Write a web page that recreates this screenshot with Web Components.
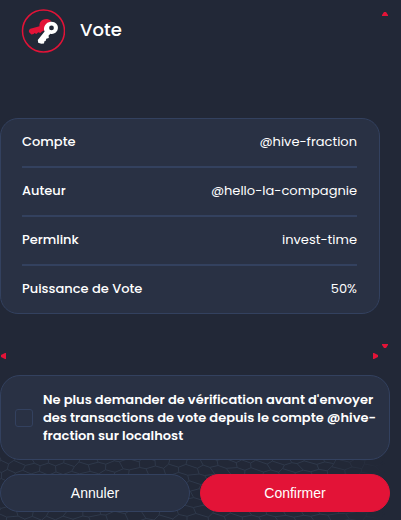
<!DOCTYPE html>
<html lang="fr">
<head>
<meta charset="utf-8">
<meta name="viewport" content="width=device-width, initial-scale=1">
<title>Vote</title>
<style>
  :root {
    --bg: #222837;
    --panel: #293144;
    --line: #33415f;
    --accent: #e31337;
    --text: #ffffff;
  }
  body {
    margin: 0;
    background: var(--bg);
    color: var(--text);
    font-family: Poppins, Inter, "Liberation Sans", sans-serif;
    font-size: 13px;
    line-height: 18px;
  }
</style>
</head>
<body>
<vote-dialog>
  <dialog-header slot="header">Vote</dialog-header>
  <detail-card slot="details">
    <detail-row label="Compte">@hive-fraction</detail-row>
    <detail-row label="Auteur">@hello-la-compagnie</detail-row>
    <detail-row label="Permlink">invest-time</detail-row>
    <detail-row label="Puissance de Vote">50%</detail-row>
  </detail-card>
  <confirm-option slot="actions">Ne plus demander de vérification avant d'envoyer des transactions de vote depuis le compte @hive-fraction sur localhost</confirm-option>
  <pill-button slot="buttons">Annuler</pill-button>
  <pill-button slot="buttons" primary>Confirmer</pill-button>
</vote-dialog>

<script>
class Base extends HTMLElement {
  constructor() {
    super();
    this.attachShadow({ mode: "open" }).innerHTML = this.constructor.html;
  }
}

customElements.define("vote-dialog", class extends Base {
  static html = `
    <style>
      :host { display: block; position: relative; min-height: 100vh; box-sizing: border-box; padding: 0 11px 8px 0; overflow: hidden; }
      hex-backdrop { position: absolute; left: 0; right: 0; bottom: 0; height: 66px; }
      main { position: relative; }
      .scroller { display: grid; grid-template-columns: 1fr 10px; grid-template-rows: auto 10px; }
      .content { padding: 9px 0 37px; }
      .details { margin-top: 65px; }
      .buttons { display: grid; grid-template-columns: 1fr 1fr; gap: 10px; margin-top: 14px; }
      .actions { margin-top: 14px; }
    </style>
    <hex-backdrop></hex-backdrop>
    <main>
      <div class="scroller">
        <div class="content">
          <slot name="header"></slot>
          <div class="details"><slot name="details"></slot></div>
        </div>
        <scroll-arrows vertical></scroll-arrows>
        <scroll-arrows></scroll-arrows>
      </div>
      <div class="actions"><slot name="actions"></slot></div>
      <div class="buttons"><slot name="buttons"></slot></div>
    </main>`;
});

customElements.define("dialog-header", class extends Base {
  static html = `
    <style>
      :host { display: flex; align-items: center; gap: 15px; padding-left: 21px; }
      svg { display: block; flex: none; }
      h1 { margin: 0; font-size: 18px; line-height: 24px; font-weight: 500; padding-bottom: 2px; }
    </style>
    <svg width="44" height="44" viewBox="0 0 44 44" aria-hidden="true">
      <circle cx="22.5" cy="22" r="21" fill="none" stroke="#e31337" stroke-width="1.5"/>
      <path fill="#e31337" d="M30 12C27 9 21.8 9.6 19.6 12.8C18.6 14.2 18.3 15.7 18.5 17.2L9.3 19.7C7.9 20.3 7.4 22.2 8.3 23.5L10.4 25.4L12.7 25L13.5 23.9L15.3 25L17.3 23.2L19.3 24L21 22.4L24 21L28 15Z"/>
      <path fill="#fff" fill-rule="evenodd" d="M29.6 12.7C34 12.2 37.4 15.3 36.9 19.3C36.4 23.5 32.6 25.6 29.4 24.7L27.6 26.6L27.8 28.9L25.3 29.7L24.6 32L23.4 32.2L23 34.4L20.3 34.8L17.2 33.8L16.8 30.9L23.6 22.6C21.6 18 24.9 13.2 29.6 12.7ZM30.5 16.5A2.4 2.4 0 1 0 30.5 21.3A2.4 2.4 0 0 0 30.5 16.5Z"/>
    </svg>
    <h1><slot></slot></h1>`;
});

customElements.define("detail-card", class extends Base {
  static html = `
    <style>
      :host { display: block; border: 1px solid var(--line); border-radius: 18px; background: var(--panel); padding: 0 22px 0 21px; }
      ::slotted(:not(:last-child)) { border-bottom: 2px solid var(--line); }
    </style>
    <slot></slot>`;
});

customElements.define("detail-row", class extends Base {
  static html = `
    <style>
      :host { display: flex; justify-content: space-between; align-items: center; padding: 14px 0 15px; }
      .label { font-weight: 500; }
      .value { font-weight: 400; }
    </style>
    <span class="label"></span><span class="value"><slot></slot></span>`;
  connectedCallback() {
    this.shadowRoot.querySelector(".label").textContent = this.getAttribute("label");
  }
});

customElements.define("confirm-option", class extends Base {
  static html = `
    <style>
      :host { display: block; border: 1px solid var(--line); border-radius: 20px; background: var(--panel); }
      label { display: flex; align-items: center; gap: 10px; padding: 15px 8px 14px 14px; font-weight: 600; }
      input { appearance: none; flex: none; box-sizing: border-box; width: 18px; height: 18px; margin: 0; border: 1px solid var(--line); border-radius: 3px; }
      input:checked { background: var(--accent); }
    </style>
    <label><input type="checkbox"><span><slot></slot></span></label>`;
});

customElements.define("pill-button", class extends Base {
  static html = `
    <style>
      :host { display: block; }
      button { display: block; box-sizing: border-box; width: 100%; height: 38px; padding: 0; border: 1px solid var(--line); border-radius: 19px; background: var(--panel); color: inherit; font: 14px "Liberation Sans", Arial, sans-serif; cursor: pointer; }
      :host([primary]) button { background: var(--accent); border-color: var(--accent); }
    </style>
    <button type="button"><slot></slot></button>`;
});

customElements.define("scroll-arrows", class extends Base {
  static html = `
    <style>
      :host { display: flex; justify-content: space-between; align-items: center; padding: 0 2px 0 1px; }
      :host([vertical]) { flex-direction: column; padding: 12px 0 3px; }
      svg { display: block; fill: var(--accent); }
      .v { display: none; }
      :host([vertical]) .v { display: block; }
      :host([vertical]) .h { display: none; }
    </style>
    <svg class="h" width="5" height="6"><path d="M5 0H4L0 2V4L4 6H5Z"/></svg>
    <svg class="h" width="5" height="6"><path d="M0 0H1L5 2V4L1 6H0Z"/></svg>
    <svg class="v" width="6" height="4"><path d="M0 4V3L2 0H4L6 3V4Z"/></svg>
    <svg class="v" width="6" height="4"><path d="M0 0V1L2 4H4L6 1V0Z"/></svg>`;
});

customElements.define("hex-backdrop", class extends Base {
  static html = `
    <style>
      :host { display: block; overflow: hidden; }
      svg { display: block; width: 100%; height: 100%; }
    </style>
    <svg viewBox="0 0 401 66" preserveAspectRatio="xMidYMax slice" aria-hidden="true">
      <defs><linearGradient id="fade"><stop offset="0.8" stop-color="#fff"/><stop offset="0.96" stop-color="#000"/></linearGradient>
      <mask id="edge"><rect width="401" height="66" fill="url(#fade)"/></mask></defs>
      <path mask="url(#edge)" fill="none" stroke="#2f394b" stroke-width="1"/>
    </svg>`;
  connectedCallback() {
    // Uneven honeycomb whose cells flatten towards the upper middle.
    const point = (x, y) => {
      const n = Math.sin(x * 12.9 + y * 78.2) * 43758.5;
      const j = n - Math.floor(n);
      const lean = Math.max(0, x - 60) / 340;
      return [x + (j - 0.5) * 5 + y * lean * 0.5, y * (1 - 0.25 * lean) + Math.sin(x / 37) * 3 + (j - 0.5) * 2].map(v => v.toFixed(1)).join(" ");
    };
    let d = "";
    for (let row = -1; row < 11; row++) {
      for (let col = -3; col < 28; col++) {
        const x = col * 16 + (row % 2 ? 8 : 0), y = row * 9;
        d += `M${point(x, y)}L${point(x + 8, y - 3)}L${point(x + 16, y)}M${point(x, y)}L${point(x, y + 6)}`;
      }
    }
    this.shadowRoot.querySelector("svg > path").setAttribute("d", d);
  }
});
</script>
</body>
</html>
